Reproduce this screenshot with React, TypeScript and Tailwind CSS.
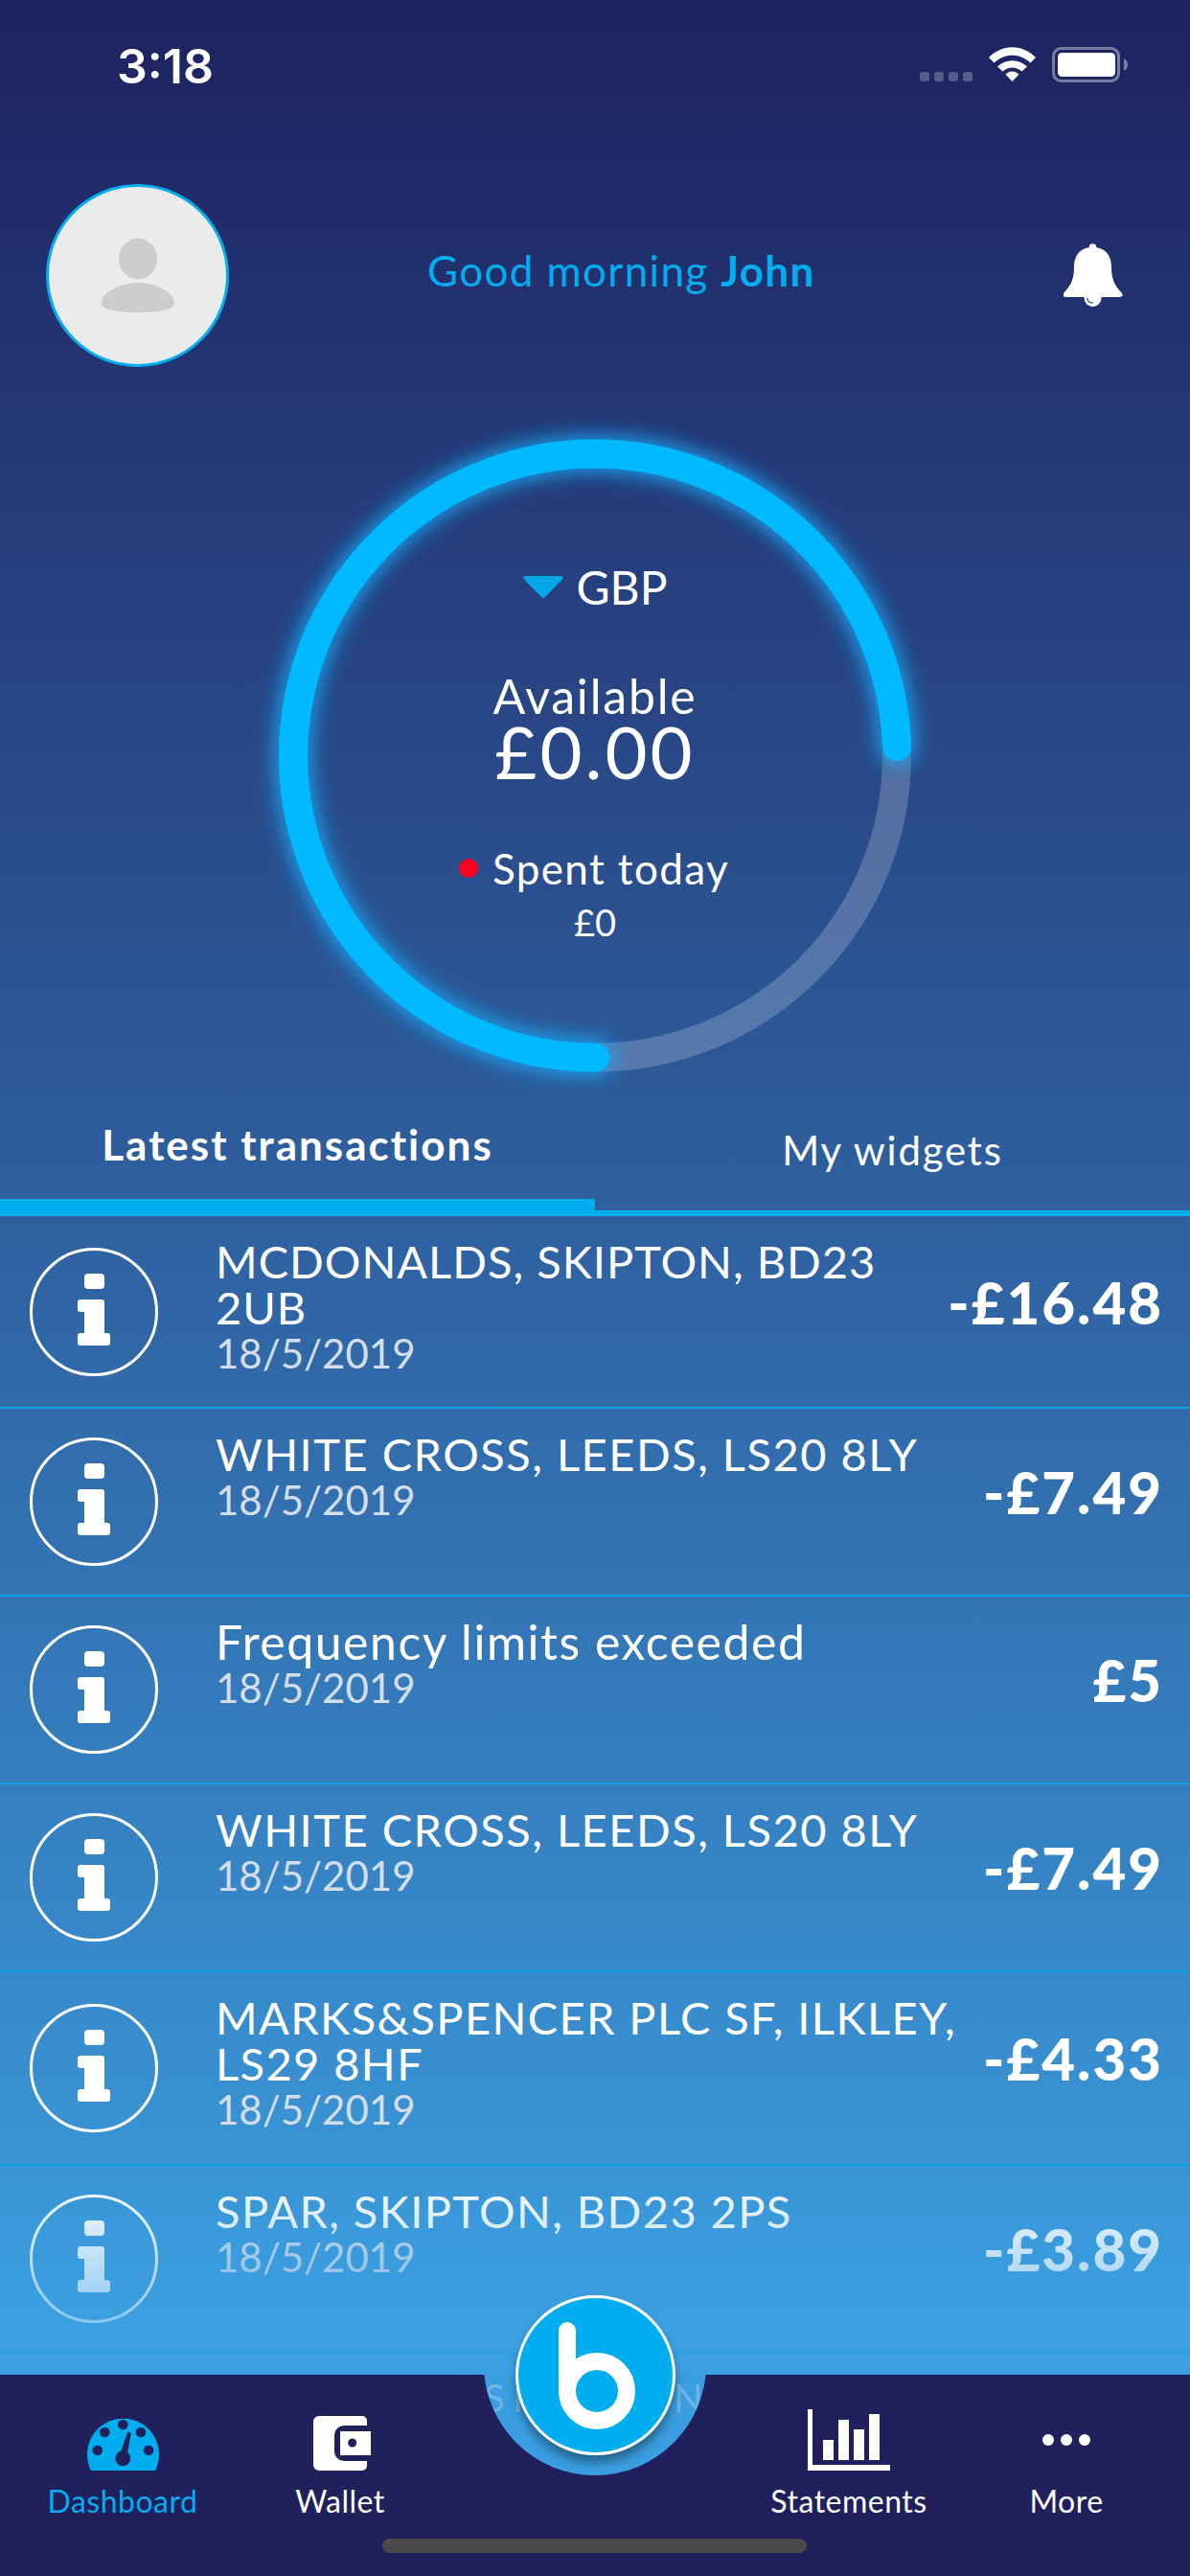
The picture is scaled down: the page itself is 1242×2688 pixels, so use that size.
const transactions = [
  { title: 'MCDONALDS, SKIPTON, BD23\n2UB', amount: '-£16.48', height: 'h-[201px]', textStyle: 'text-[47px] tracking-[1px]' },
  { title: 'WHITE CROSS, LEEDS, LS20 8LY', amount: '-£7.49', height: 'h-[196px]', textStyle: 'text-[47px] tracking-[1.5px]' },
  { title: 'Frequency limits exceeded', amount: '£5', height: 'h-[196px]', textStyle: 'text-[50px] tracking-[1.5px]' },
  { title: 'WHITE CROSS, LEEDS, LS20 8LY', amount: '-£7.49', height: 'h-[196px]', textStyle: 'text-[47px] tracking-[1.5px]' },
  { title: 'MARKS&SPENCER PLC SF, ILKLEY,\nLS29 8HF', amount: '-£4.33', height: 'h-[202px]', textStyle: 'text-[47px] tracking-[1.4px]' },
  { title: 'SPAR, SKIPTON, BD23 2PS', amount: '-£3.89', height: 'h-[196px]', textStyle: 'text-[47px] tracking-[1.4px]' },
]

function InfoIcon() {
  return (
    <div className="flex h-[134px] w-[134px] shrink-0 items-center justify-center rounded-full border-[3px] border-white">
      <svg className="mt-[-5px]" width="34" height="75" viewBox="0 0 34 75" fill="#fff">
        <rect x="7" y="0" width="21" height="16" rx="4" />
        <path d="M3 27h22a3 3 0 0 1 3 3v32h3a3 3 0 0 1 3 3v7a3 3 0 0 1-3 3H3a3 3 0 0 1-3-3v-7a3 3 0 0 1 3-3h4V40H3a3 3 0 0 1-3-3v-7a3 3 0 0 1 3-3z" />
      </svg>
    </div>
  )
}

function Row({ title, amount, height, textStyle }: { title: string; amount: string; height: string; textStyle: string }) {
  return (
    <div className={`flex items-center border-b-2 border-[#0f9fe3] pl-[31px] pr-[28px] ${height}`}>
      <InfoIcon />
      <div className="ml-[60px] flex-1 self-start pt-[23px]">
        <div className={`whitespace-pre-line leading-[48px] text-white ${textStyle}`}>{title}</div>
        <div className="text-[42px] leading-[48px] text-[#d3deea]">18/5/2019</div>
      </div>
      <div className="mb-[20px] text-[60px] font-black leading-none tracking-[2px] text-white">{amount}</div>
    </div>
  )
}

function Ring() {
  return (
    <svg className="absolute inset-0 overflow-visible" width="660" height="661" viewBox="0 0 660 661" fill="none">
      <defs>
        <filter id="glow" x="-10%" y="-10%" width="120%" height="120%">
          <feGaussianBlur stdDeviation="11" />
        </filter>
      </defs>
      <circle cx="330" cy="330.5" r="315" stroke="#fff" strokeOpacity="0.2" strokeWidth="30" />
      <path d="M330 645.5A315 315 0 1 1 645 321" stroke="#19a9f5" strokeWidth="36" strokeLinecap="round" filter="url(#glow)" />
      <path d="M330 645.5A315 315 0 1 1 645 321" stroke="#00b9ff" strokeWidth="30" strokeLinecap="round" />
    </svg>
  )
}

function Gauge() {
  return (
    <svg width="75" height="59" viewBox="0 0 75 59">
      <path d="M4 59A37.500 37.500 0 1 1 71 59z" fill="#00aeef" />
      <g fill="#20205c">
        <circle cx="10.700" cy="37.700" r="5.300" />
        <circle cx="18.300" cy="19" r="5.300" />
        <circle cx="37.300" cy="11" r="5.300" />
        <circle cx="56" cy="19" r="5.300" />
        <circle cx="64" cy="37.700" r="5.300" />
        <circle cx="37.300" cy="46.300" r="8" />
        <path d="M33.500 44L41.500 20.500a2 2 0 0 1 4 .8L41 46z" />
      </g>
    </svg>
  )
}

function Wallet() {
  return (
    <svg className="ml-[3px]" width="60" height="57" viewBox="0 0 60 57">
      <path d="M6 0h45a5 5 0 0 1 5 5v5H32a10 10 0 0 0-10 10v17a10 10 0 0 0 10 10h24v5a5 5 0 0 1-5 5H6a6 6 0 0 1-6-6V6a6 6 0 0 1 6-6z" fill="#fff" />
      <path d="M28 16h32v25H28z" fill="#fff" />
      <circle cx="40.700" cy="28" r="4.500" fill="#20205c" />
    </svg>
  )
}

function Chart() {
  return (
    <svg width="86" height="64" viewBox="0 0 86 64" fill="#fff">
      <path d="M0 0h5v58h81v6H0z" />
      <rect x="16" y="32" width="11" height="21" />
      <rect x="32" y="11" width="11" height="42" />
      <rect x="48" y="21" width="11" height="32" />
      <rect x="64" y="5" width="11" height="48" />
    </svg>
  )
}

function NavItem({ label, active, children }: { label: string; active?: boolean; children: React.ReactNode }) {
  return (
    <div className="flex flex-col items-center">
      <div className="flex h-[70px] items-end">{children}</div>
      <div className={`mt-[14px] text-[32px] leading-[36px] tracking-[0.5px] ${active ? 'text-[#00aeef]' : 'text-white'}`}>{label}</div>
    </div>
  )
}

export default function App() {
  return (
    <div
      className="relative flex h-[2688px] w-[1242px] flex-col overflow-hidden bg-[#20205c]"
      style={{ fontFamily: 'Lato, "Noto Sans", sans-serif' }}
    >
      <main className="relative h-[2478px] bg-gradient-to-b from-[#1e2260] to-[#3ba0e1]">
        {/* status bar */}
        <div className="flex h-[192px] items-start pt-[39px]">
          <div className="ml-[122px] text-[50px] font-semibold leading-[60px] text-white" style={{ fontFamily: 'Inter, sans-serif' }}>
            3:18
          </div>
          <div className="ml-[737px] mt-[36px] flex gap-[5px]">
            {[0, 1, 2, 3].map(i => (
              <div key={i} className="h-[10px] w-[10px] rounded-[3px] bg-white/25" />
            ))}
          </div>
          <svg className="ml-[17px] mt-[10px]" width="49" height="36" viewBox="0 0 49 36" fill="#fff">
            <path d="M0 11C14-3.500 35-3.500 49 11l-5.500 5.500C32 6 17 6 5.500 16.500z" />
            <path d="M9 20.500C18 12 31 12 40 20.500l-5.500 5C28 20 21 20 14.500 25.500z" />
            <path d="M17.500 28.500c4.500-4 9.500-4 14 0L24.500 36z" />
          </svg>
          <svg className="ml-[17px] mt-[10px]" width="79" height="37" viewBox="0 0 79 37" fill="none">
            <rect x="1.500" y="1.500" width="68" height="34" rx="8" stroke="#fff" strokeOpacity="0.4" strokeWidth="3" />
            <rect x="6" y="6" width="60" height="25" rx="4.500" fill="#fff" />
            <path d="M75 12c2.500 1 4 3.500 4 6.500s-1.500 5.500-4 6.500z" fill="#fff" fillOpacity="0.4" />
          </svg>
        </div>

        {/* header */}
        <div className="flex items-center pl-[48px]">
          <div className="flex h-[191px] w-[191px] shrink-0 items-center justify-center rounded-full border-[3px] border-[#00aeef] bg-[#ebebeb]">
            <svg width="80" height="80" viewBox="0 0 80 80" fill="#cdcdcd">
              <ellipse cx="40" cy="22" rx="20" ry="21.500" />
              <path d="M2 68C2 56 24 47 40 47s38 9 38 21c0 6-10 10-38 10S2 74 2 68z" />
            </svg>
          </div>
          <div className="ml-[207px] mt-[-12px] w-[403px] whitespace-nowrap text-[44px] leading-[50px] tracking-[1.35px] text-[#00aeef]">
            Good morning <span className="font-bold">John</span>
          </div>
          <svg className="ml-[261px] mt-[-2px]" width="62" height="66" viewBox="0 0 62 66" fill="#fff">
            <circle cx="30.500" cy="4" r="3.800" />
            <path d="M30.500 4C45 4 50 14 50 25c0 15 5 20 11 27 1.500 2 .5 4-3 4H3c-3.500 0-4.500-2-3-4C6 45 11 40 11 25 11 14 16 4 30.500 4z" />
            <circle cx="30.500" cy="57" r="9" />
            <path d="M24.500 57c.5 3 3 5 6.500 5" fill="none" stroke="#24336f" strokeWidth="1.200" />
          </svg>
        </div>

        {/* balance ring */}
        <div className="relative mx-auto mt-[75px] h-[661px] w-[660px]">
          <Ring />
          <div className="relative flex flex-col items-center pt-[131px] text-white">
            <div className="flex items-center text-[48px] leading-[48px]">
              <svg className="mr-[14px]" width="42" height="24" viewBox="0 0 42 24" fill="#00a8e8">
                <path d="M3 0h36c2.500 0 3.500 2 2 3.500L23 22c-1 1.500-3 1.500-4 0L1 3.500C-.5 2 .5 0 3 0z" />
              </svg>
              GBP
            </div>
            <div className="mt-[67px] text-[50px] leading-[44px] tracking-[1.8px]">Available</div>
            <div className="mt-[1px] text-[76px] leading-[70px] tracking-[3px]">£0.00</div>
            <div className="ml-[-2px] mt-[63px] flex items-center text-[44px] leading-[48px] tracking-[1.4px]">
              <span className="mr-[15px] h-[20px] w-[20px] rounded-full bg-[#ff0022]" />
              Spent today
            </div>
            <div className="mt-[12px] text-[38px] leading-[40px]">£0</div>
          </div>
        </div>

        {/* tabs */}
        <div className="flex h-[150px] items-stretch text-white">
          <div className="flex w-[621px] items-center justify-center border-b-[18px] border-[#00aeef] pt-[18px] text-[44px] font-bold tracking-[2px]">
            Latest transactions
          </div>
          <div className="flex w-[621px] items-center justify-center border-b-[6px] border-[#00aeef] pt-[18px] text-[42px] tracking-[1.8px]">
            My widgets
          </div>
        </div>

        {/* transaction list */}
        <div>
          {transactions.map((t, i) => (
            <Row key={i} {...t} />
          ))}
        </div>

        {/* list fades out under the nav */}
        <div className="absolute bottom-0 left-0 h-[208px] w-full bg-gradient-to-b from-transparent to-[#3ba0e1]/80" />
      </main>

      {/* bottom nav */}
      <nav className="relative h-[210px] overflow-hidden">
        <div className="absolute left-[505px] top-[-127px] h-[232px] w-[232px] overflow-hidden rounded-full bg-[#3a9ee0] text-[40px] leading-[60px] text-white/25">
          <span className="absolute left-0 top-[121px]">S</span>
          <span className="absolute left-[30px] top-[121px]">I</span>
          <span className="absolute left-[198px] top-[121px]">N</span>
        </div>
        <div className="relative grid grid-cols-[256px_198px_334px_196px_258px] pt-[30px]">
          <NavItem label="Dashboard" active>
            <Gauge />
          </NavItem>
          <NavItem label="Wallet">
            <Wallet />
          </NavItem>
          <div />
          <NavItem label="Statements">
            <Chart />
          </NavItem>
          <NavItem label="More">
            <div className="mb-[26px] flex gap-[7px]">
              {[0, 1, 2].map(i => (
                <div key={i} className="h-[12px] w-[12px] rounded-full bg-white" />
              ))}
            </div>
          </NavItem>
        </div>
        <div className="absolute left-[399px] top-[171px] h-[15px] w-[443px] rounded-full bg-[#4a4a4a]" />
      </nav>

      {/* centre button */}
      <div className="absolute left-[538px] top-[2395px] flex h-[167px] w-[167px] items-center justify-center rounded-full border-[3px] border-white bg-[#00aeef] shadow-[0_8px_10px_rgba(0,0,0,0.35)]">
        <svg className="ml-[3px]" width="80" height="112" viewBox="0 0 80 112" fill="none" stroke="#fff" strokeWidth="18">
          <path d="M9 9v63" strokeLinecap="round" />
          <circle cx="40" cy="72" r="31" />
        </svg>
      </div>
    </div>
  )
}
